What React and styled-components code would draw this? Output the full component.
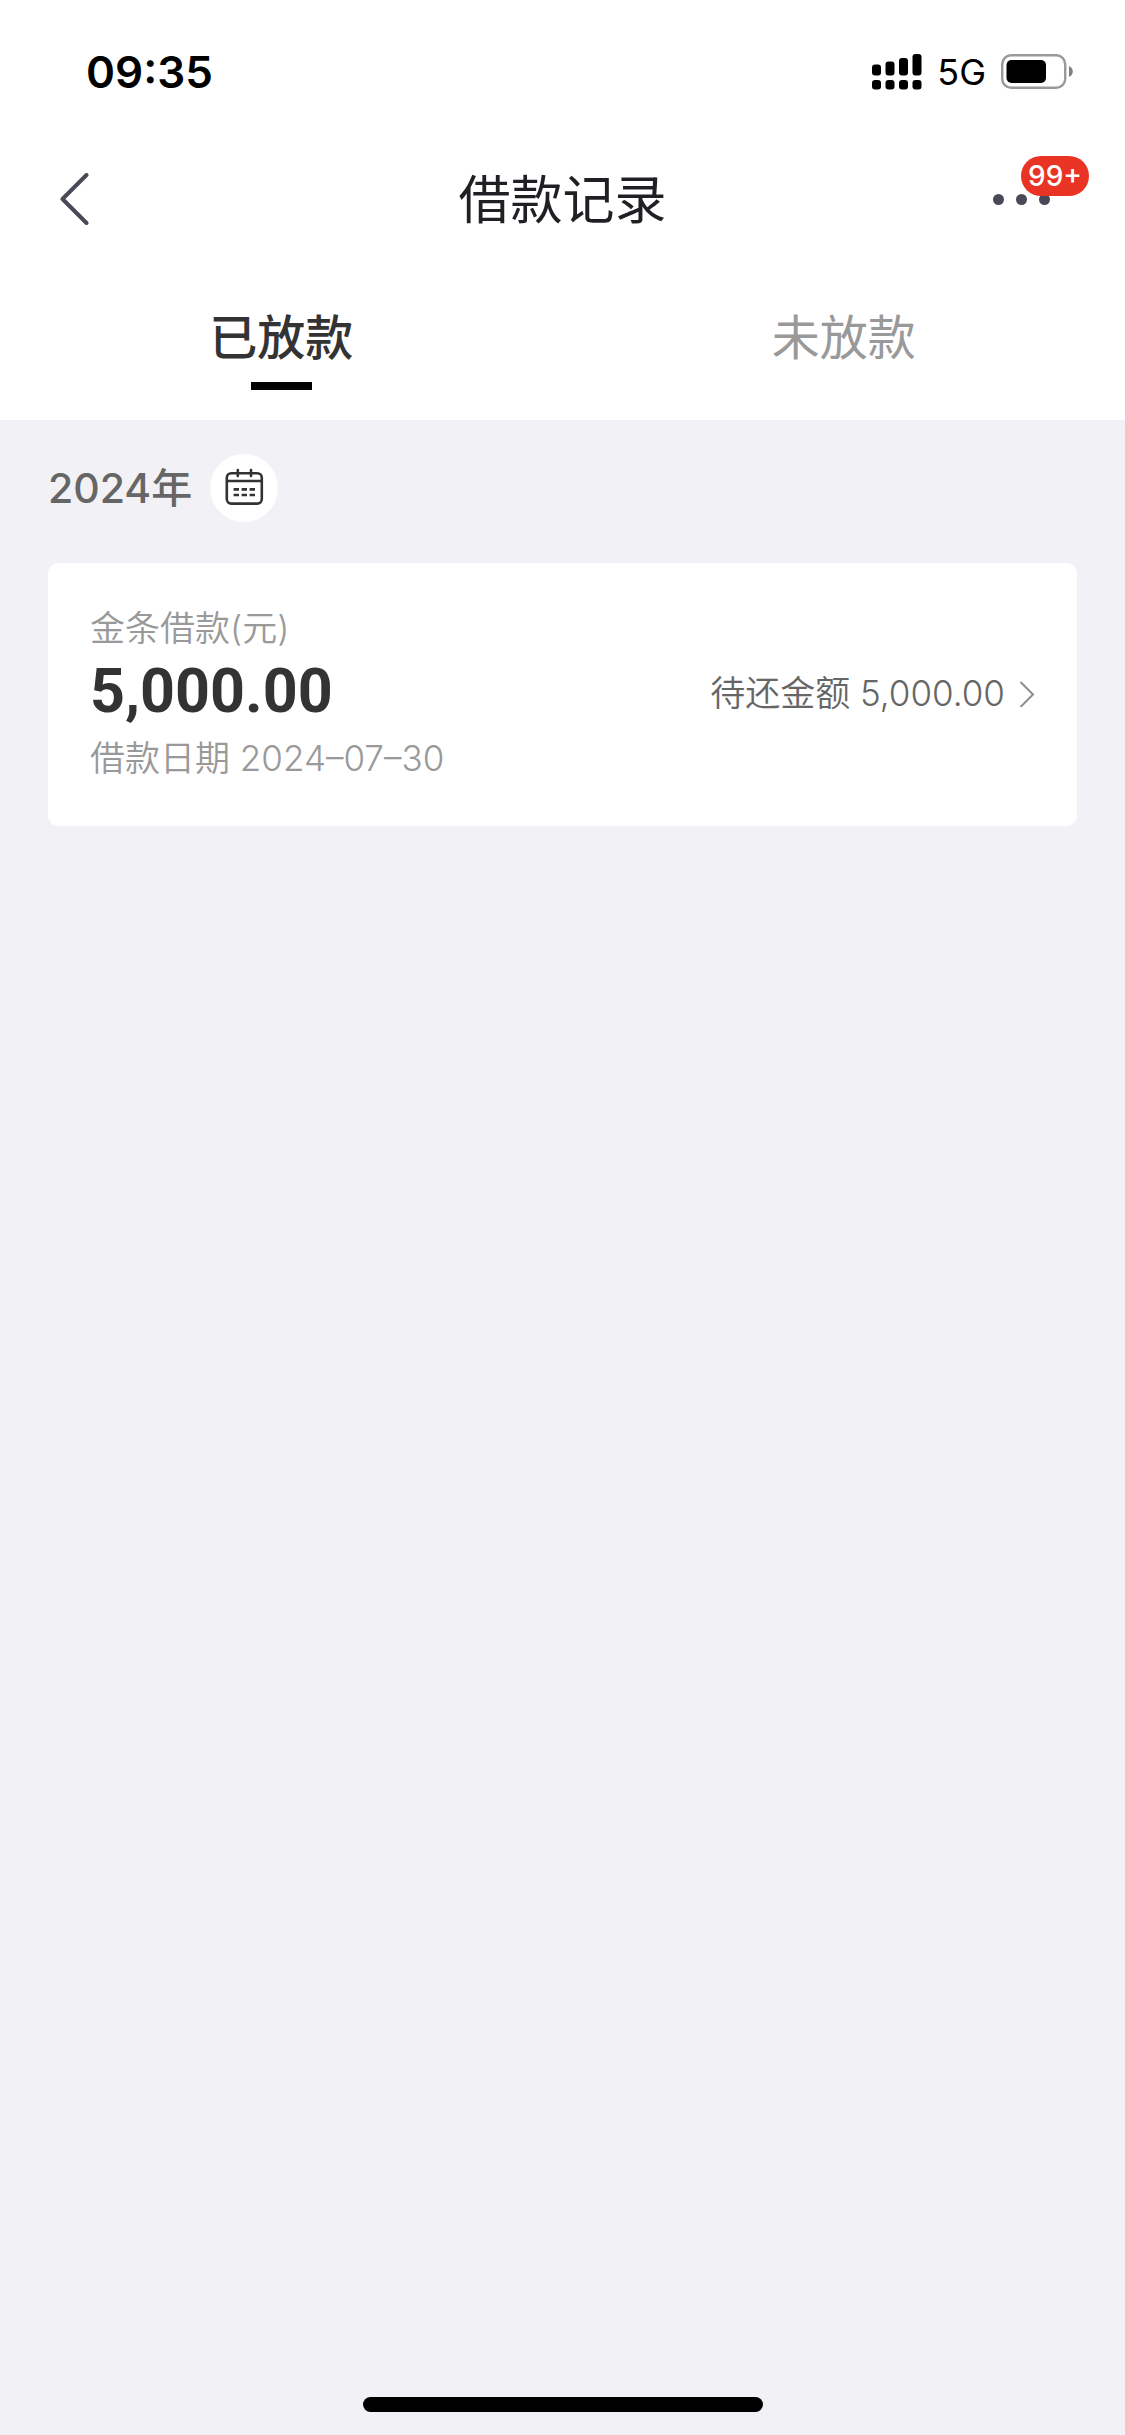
import { useState } from 'react'
import styled, { createGlobalStyle } from 'styled-components'

const tabs = ['已放款', '未放款']

const loans = [
  { id: 1, title: '金条借款(元)', amount: '5,000.00', date: '2024–07–30', remaining: '5,000.00' },
]

export default function App() {
  const [active, setActive] = useState(0)

  return (
    <Page>
      <GlobalStyle />
      <Header>
        <StatusBar>
          <Time>09:35</Time>
          <StatusIcons>
            <SignalIcon />
            <Network>5G</Network>
            <BatteryIcon />
          </StatusIcons>
        </StatusBar>
        <NavBar>
          <IconButton type="button" aria-label="返回">
            <BackIcon />
          </IconButton>
          <Title>借款记录</Title>
          <MoreButton type="button" aria-label="更多">
            <DotsIcon />
            <Badge>99+</Badge>
          </MoreButton>
        </NavBar>
        <Tabs role="tablist">
          {tabs.map((tab, index) => (
            <Tab
              key={tab}
              type="button"
              role="tab"
              aria-selected={index === active}
              $active={index === active}
              onClick={() => setActive(index)}
            >
              {tab}
            </Tab>
          ))}
        </Tabs>
      </Header>
      <Content>
        <YearRow>
          <Year>2024年</Year>
          <CalendarButton type="button" aria-label="选择年份">
            <CalendarIcon />
          </CalendarButton>
        </YearRow>
        {loans.map(loan => (
          <Loan key={loan.id} {...loan} />
        ))}
      </Content>
      <HomeIndicator />
    </Page>
  )
}

const Loan = ({ title, amount, date, remaining }) => (
  <Card href="#loan">
    <div>
      <Caption>{title}</Caption>
      <Amount>{amount}</Amount>
      <Caption>借款日期 {date}</Caption>
    </div>
    <Remaining>
      待还金额 {remaining}
      <ArrowIcon />
    </Remaining>
  </Card>
)

const SignalIcon = () => (
  <svg width="50" height="36" viewBox="0 0 50 36" aria-hidden="true">
    <rect x="0" y="10.5" width="9" height="11" rx="3" />
    <rect x="13.5" y="7.5" width="9" height="14" rx="3" />
    <rect x="27" y="4" width="9" height="17.5" rx="3" />
    <rect x="40.5" y="0" width="9" height="21.5" rx="3" />
    <rect x="0" y="26" width="9" height="9.5" rx="3" />
    <rect x="13.5" y="26" width="9" height="9.5" rx="3" />
    <rect x="27" y="26" width="9" height="9.5" rx="3" />
    <rect x="40.5" y="26" width="9" height="9.5" rx="3" />
  </svg>
)

const BatteryIcon = () => (
  <svg width="72" height="36" viewBox="0 0 72 36" aria-hidden="true">
    <rect x="1.2" y="1.2" width="63" height="32.6" rx="9" fill="none" stroke="#999" strokeWidth="2.4" />
    <rect x="5.5" y="6" width="39.5" height="23" rx="5" />
    <path d="M68 12c5 2 5 9 0 11z" fill="#808080" />
  </svg>
)

const BackIcon = () => (
  <svg width="30" height="54" viewBox="0 0 30 54" aria-hidden="true">
    <path
      d="M26.5 2 2.500 26l24 24"
      fill="none"
      stroke="#484b57"
      strokeWidth="4"
      strokeLinecap="round"
      strokeLinejoin="round"
    />
  </svg>
)

const DotsIcon = () => (
  <svg width="58" height="12" viewBox="0 0 58 12" fill="#484b57" aria-hidden="true">
    <circle cx="5.5" cy="5.5" r="5.5" />
    <circle cx="28.5" cy="5.5" r="5.5" />
    <circle cx="51.5" cy="5.5" r="5.5" />
  </svg>
)

const CalendarIcon = () => (
  <svg width="40" height="40" viewBox="0 0 40 40" fill="none" stroke="#333" strokeWidth="2.6" aria-hidden="true">
    <rect x="2.8" y="5.2" width="35" height="30.4" rx="4.5" />
    <path d="M2.6 13h35" />
    <path d="M13.8 2v6M27 2v6" strokeLinecap="round" />
    <path d="M9.6 21.4h5.4M17.6 21.4h5.4M25.6 21.4h5.4M9.6 27h5.4M17.6 27h5.4M25.6 27h5.4" />
  </svg>
)

const ArrowIcon = () => (
  <svg width="16" height="28" viewBox="0 0 16 28" aria-hidden="true">
    <path d="M1.5 3 14 15.500 1.5 28" fill="none" stroke="#8c8c8c" strokeWidth="2" />
  </svg>
)

const GlobalStyle = createGlobalStyle`
  * {
    box-sizing: border-box;
  }

  body {
    margin: 0;
    background: #f2f1f6;
    font-family: Inter, 'Noto Sans CJK SC', sans-serif;
  }

  button {
    padding: 0;
    border: 0;
    background: none;
    font-family: inherit;
    cursor: pointer;
  }

  svg {
    display: block;
    flex-shrink: 0;
  }
`

const Page = styled.div`
  display: flex;
  flex-direction: column;
  min-height: 100vh;
`

const Header = styled.header`
  background: #fff;
`

const StatusBar = styled.div`
  display: flex;
  align-items: center;
  justify-content: space-between;
  height: 144px;
  padding: 0 52px 0 86px;
`

const Time = styled.span`
  font-size: 44px;
  font-weight: 600;
  color: #000;
`

const StatusIcons = styled.div`
  display: flex;
  align-items: center;
  gap: 15px;
`

const Network = styled.span`
  font-size: 36px;
  color: #000;
`

const NavBar = styled.nav`
  display: grid;
  grid-template-columns: 1fr auto 1fr;
  align-items: center;
  height: 112px;
  padding: 0 60px;
`

const IconButton = styled.button`
  justify-self: start;
`

const Title = styled.h1`
  margin: 0;
  padding-top: 2px;
  font-size: 52px;
  font-weight: 400;
  line-height: 72px;
  color: #1f2024;
`

const MoreButton = styled.button`
  position: relative;
  justify-self: end;
  padding-right: 14px;
`

const Badge = styled.span`
  position: absolute;
  left: 28px;
  bottom: 10px;
  padding: 0 7px;
  border-radius: 20px;
  background: #e93324;
  font-size: 28px;
  font-weight: 500;
  line-height: 40px;
  color: #fff;
`

const Tabs = styled.div`
  display: grid;
  grid-template-columns: 1fr 1fr;
  height: 164px;
  padding: 50px 0 30px;
`

const Tab = styled.button`
  display: flex;
  flex-direction: column;
  align-items: center;
  justify-content: space-between;
  font-size: 48px;
  font-weight: ${({ $active }) => ($active ? 500 : 400)};
  line-height: 64px;
  color: ${({ $active }) => ($active ? '#333' : '#999')};

  &::after {
    content: '';
    width: 61px;
    height: 8px;
    background: ${({ $active }) => ($active ? '#000' : 'transparent')};
  }
`

const Content = styled.main`
  flex: 1;
  padding: 0 48px;
`

const YearRow = styled.div`
  display: flex;
  align-items: center;
  gap: 18px;
  padding: 34px 0 41px;
`

const Year = styled.h2`
  margin: 0;
  font-size: 41px;
  font-weight: 500;
  line-height: 60px;
  color: #666;
`

const CalendarButton = styled.button`
  display: flex;
  align-items: center;
  justify-content: center;
  width: 68px;
  height: 68px;
  border-radius: 50%;
  background: #fff;
`

const Card = styled.a`
  display: flex;
  align-items: center;
  justify-content: space-between;
  padding: 39px 42px 42px;
  border-radius: 10px;
  background: #fff;
  text-decoration: none;
`

const Caption = styled.p`
  margin: 0;
  font-size: 35px;
  font-weight: 350;
  line-height: 52px;
  color: #999;
`

const Amount = styled.p`
  margin: 0 0 4px;
  font-family: Roboto, sans-serif;
  font-size: 61px;
  font-weight: 700;
  line-height: 74px;
  color: #333;
`

const Remaining = styled.span`
  display: flex;
  align-items: center;
  gap: 14px;
  font-size: 35px;
  font-weight: 350;
  line-height: 52px;
  color: #666;
`

const HomeIndicator = styled.div`
  align-self: center;
  width: 400px;
  height: 15px;
  margin-bottom: 23px;
  border-radius: 8px;
  background: #000;
`
